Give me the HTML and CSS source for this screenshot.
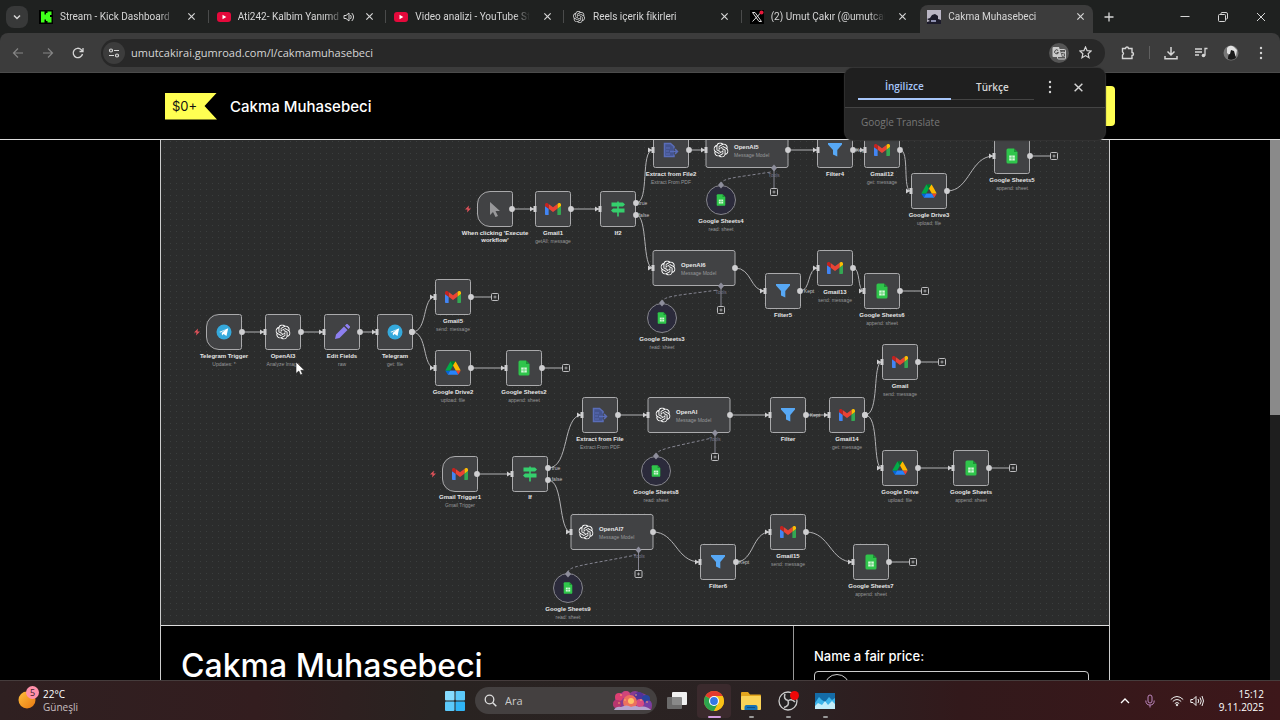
FILE: index.html
```html
<!DOCTYPE html>
<html lang="tr">
<head>
	<meta charset="utf-8">
	<meta name="viewport" content="width=device-width, initial-scale=1">
	<title>Cakma Muhasebeci</title>
	<link rel="stylesheet" href="styles.css">
</head>
<body>

	<!-- Shared icons -->
	<svg class="defs" width="0" height="0" aria-hidden="true">
		<symbol id="x" viewBox="0 0 10 10"><path d="M1.5 1.5l7 7M8.5 1.5l-7 7" fill="none" stroke="currentColor" stroke-width="1.3"/></symbol>
		<symbol id="dots" viewBox="0 0 4 14"><g fill="currentColor"><circle cx="2" cy="2" r="1.2"/><circle cx="2" cy="7" r="1.2"/><circle cx="2" cy="12" r="1.2"/></g></symbol>
		<symbol id="youtube" viewBox="0 0 14 14"><rect y="2" width="14" height="10" rx="3" fill="#e5093b"/><path d="M5.5 4.8v4.4L9.3 7z" fill="#fff"/></symbol>
		<symbol id="openai" viewBox="0 0 24 24"><path fill="currentColor" d="M22.2819 9.8211a5.9847 5.9847 0 0 0-.5157-4.9108 6.0462 6.0462 0 0 0-6.5098-2.9A6.0651 6.0651 0 0 0 4.9807 4.1818a5.9847 5.9847 0 0 0-3.9977 2.9 6.0462 6.0462 0 0 0 .7427 7.0966 5.98 5.98 0 0 0 .511 4.9107 6.051 6.051 0 0 0 6.5146 2.9001A5.9847 5.9847 0 0 0 13.2599 24a6.0557 6.0557 0 0 0 5.7718-4.2058 5.9894 5.9894 0 0 0 3.9977-2.9001 6.0557 6.0557 0 0 0-.7475-7.073zm-9.022 12.6081a4.4755 4.4755 0 0 1-2.8764-1.0408l.1419-.0804 4.7783-2.7582a.7948.7948 0 0 0 .3927-.6813v-6.7369l2.02 1.1686a.071.071 0 0 1 .038.052v5.5826a4.504 4.504 0 0 1-4.4945 4.4944zm-9.6607-4.1254a4.4708 4.4708 0 0 1-.5346-3.0137l.142.0852 4.783 2.7582a.7712.7712 0 0 0 .7806 0l5.8428-3.3685v2.3324a.0804.0804 0 0 1-.0332.0615L9.74 19.9502a4.4992 4.4992 0 0 1-6.1408-1.6464zM2.3408 7.8956a4.485 4.485 0 0 1 2.3655-1.9728V11.6a.7664.7664 0 0 0 .3879.6765l5.8144 3.3543-2.0201 1.1685a.0757.0757 0 0 1-.071 0l-4.8303-2.7865A4.504 4.504 0 0 1 2.3408 7.872zm16.5963 3.8558L13.1038 8.364 15.1192 7.2a.0757.0757 0 0 1 .071 0l4.8303 2.7913a4.4944 4.4944 0 0 1-.6765 8.1042v-5.6772a.79.79 0 0 0-.407-.667zm2.0107-3.0231l-.142-.0852-4.7735-2.7818a.7759.7759 0 0 0-.7854 0L9.409 9.2297V6.8974a.0662.0662 0 0 1 .0284-.0615l4.8303-2.7866a4.4992 4.4992 0 0 1 6.6802 4.66zM8.3065 12.863l-2.02-1.1638a.0804.0804 0 0 1-.038-.0567V6.0742a4.4992 4.4992 0 0 1 7.3757-3.4537l-.142.0805L8.704 5.459a.7948.7948 0 0 0-.3927.6813zm1.0976-2.3654l2.602-1.4998 2.6069 1.4998v2.9994l-2.5974 1.4997-2.6067-1.4997Z"/></symbol>
	</svg>

	<header class="browser">
		<div class="tabstrip">
			<button class="tab-search" aria-label="Search tabs"><svg width="10" height="10" viewBox="0 0 10 10"><path d="M2 3.5l3 3 3-3" fill="none" stroke="currentColor" stroke-width="1.5"/></svg></button>
			<div class="tabs">
				<div class="tab">
					<svg class="favicon" viewBox="0 0 14 14"><rect width="14" height="14" fill="#000"/><path d="M2 1.500h3.500v3h1.500v-1.500h1.500v-1.500h4v3.500h-1.500v2h1.500v5.500h-4v-1.500h-1.500v-1.500h-1.500v3h-3.500z" fill="#3fff1a"/></svg>
					<span class="tab-title">Stream - Kick Dashboard</span>
					<button class="tab-close" aria-label="Close"><svg><use href="#x"/></svg></button>
				</div>
				<div class="tab">
					<svg class="favicon"><use href="#youtube"/></svg>
					<span class="tab-title">Ati242- Kalbim Yanımd</span>
					<svg class="sound" viewBox="0 0 12 12" fill="none" stroke="currentColor"><path d="M1 4.500h2l3-2.500v8l-3-2.500h-2zM7.500 4q1.500 2 0 4M8.800 2q3.500 4 0 8"/></svg>
					<button class="tab-close" aria-label="Close"><svg><use href="#x"/></svg></button>
				</div>
				<div class="tab">
					<svg class="favicon"><use href="#youtube"/></svg>
					<span class="tab-title">Video analizi - YouTube Stu</span>
					<button class="tab-close" aria-label="Close"><svg><use href="#x"/></svg></button>
				</div>
				<div class="tab">
					<svg class="favicon"><use href="#openai" x="1" y="1" width="12" height="12"/></svg>
					<span class="tab-title">Reels içerik fikirleri</span>
					<button class="tab-close" aria-label="Close"><svg><use href="#x"/></svg></button>
				</div>
				<div class="tab">
					<svg class="favicon" viewBox="0 0 14 14"><rect width="14" height="14" fill="#000"/><path d="M2.500 2.500h2.500l6.500 9h-2.500zM11 2.500l-8.500 9" fill="none" stroke="#ddd"/><circle cx="11.500" cy="2.500" r="2" fill="#e5193b"/></svg>
					<span class="tab-title">(2) Umut Çakır (@umutcak</span>
					<button class="tab-close" aria-label="Close"><svg><use href="#x"/></svg></button>
				</div>
				<div class="tab tab-active">
					<svg class="favicon" viewBox="0 0 14 14"><rect width="14" height="14" fill="#b9b5c4"/><path d="M0 9l3-1 2-3 3-1 3 2 0 3 3 1v4h-14v-2l3-1z" fill="#1c1b2b"/><path d="M4 10h5v2h-5z" fill="#8d90b0"/></svg>
					<span class="tab-title">Cakma Muhasebeci</span>
					<button class="tab-close" aria-label="Close"><svg><use href="#x"/></svg></button>
				</div>
			</div>
			<button class="new-tab" aria-label="New tab"><svg width="10" height="10" viewBox="0 0 10 10"><path d="M5 .5v9M.5 5h9" stroke="currentColor" stroke-width="1.300"/></svg></button>
			<div class="window-controls">
				<button aria-label="Minimize"><svg width="10" height="10" viewBox="0 0 10 10"><path d="M.5 4.500h9" stroke="currentColor"/></svg></button>
				<button aria-label="Restore"><svg width="10" height="10" viewBox="0 0 10 10" fill="none" stroke="currentColor"><rect x=".5" y="2.500" width="7" height="7" rx="1"/><path d="M3 2v-.5q0-1 1-1h4q1.500 0 1.500 1.500v4q0 1-1 1h-.5"/></svg></button>
				<button aria-label="Close window"><svg width="10" height="10" viewBox="0 0 10 10"><path d="M1 1l8 8M9 1l-8 8" stroke="currentColor"/></svg></button>
			</div>
		</div>

		<div class="toolbar">
			<div class="nav-buttons">
				<button class="off" aria-label="Back"><svg width="12" height="12" viewBox="0 0 12 12"><path d="M11 6h-9.500M6 1.500l-4.500 4.500 4.500 4.500" fill="none" stroke="currentColor" stroke-width="1.200"/></svg></button>
				<button class="off" aria-label="Forward"><svg width="12" height="12" viewBox="0 0 12 12"><path d="M1 6h9.500M6 1.500l4.500 4.500-4.500 4.500" fill="none" stroke="currentColor" stroke-width="1.200"/></svg></button>
				<button aria-label="Reload"><svg width="12" height="12" viewBox="0 0 12 12"><path d="M10.500 7a4.700 4.700 0 1 1-1.300-4.400l1.500 1.600M11 1v3.500h-3.500" fill="none" stroke="currentColor" stroke-width="1.300"/></svg></button>
			</div>
			<div class="omnibox">
				<button class="site-info" aria-label="Site information"><svg width="12" height="12" viewBox="0 0 12 12" fill="none" stroke="currentColor" stroke-width="1.200"><circle cx="3" cy="3.500" r="1.500"/><path d="M6 3.500h5M1 8.500h5"/><circle cx="9" cy="8.500" r="1.500"/></svg></button>
				<input class="url" type="text" aria-label="Address" value="umutcakirai.gumroad.com/l/cakmamuhasebeci">
				<button class="translate" aria-label="Translate this page"><svg width="14" height="14" viewBox="0 0 14 14"><rect x="5.500" y="3.500" width="8" height="9.500" rx="1" fill="none" stroke="#ccc"/><path d="M1.500 1h5.500l3 10h-8.500q-1 0-1-1v-8q0-1 1-1z" fill="#ccc"/><path d="M6.200 4.600a2 2 0 1 0 .3 2h-1.800" fill="none" stroke="#444"/><path d="M9 6.500h4M11 5.500v1M12.500 6.500q-1 3-2.500 4M10 8l2.500 3" fill="none" stroke="#ccc" stroke-width=".8"/></svg></button>
				<button class="star" aria-label="Bookmark this tab"><svg width="13" height="13" viewBox="0 0 13 13"><path d="M6.500 1l1.600 3.700 4 .3-3 2.700.9 4-3.500-2.100-3.500 2.100.9-4-3-2.700 4-.3z" fill="none" stroke="currentColor" stroke-width="1.200"/></svg></button>
			</div>
			<div class="actions">
				<button aria-label="Extensions"><svg width="14" height="14" viewBox="0 0 14 14"><path d="M1.500 2.500h3a1.500 1.500 0 0 1 3 0h3.500v4a1.500 1.500 0 0 1 0 3v3h-9.500v-3.500q2-1.500 0-3z" fill="none" stroke="currentColor" stroke-width="1.400"/></svg></button>
				<span class="divider"></span>
				<button aria-label="Downloads"><svg width="14" height="14" viewBox="0 0 14 14"><path d="M7 1v7.500M3.500 5.500l3.500 3.500 3.500-3.500M1 10v2.800h12v-2.800" fill="none" stroke="currentColor" stroke-width="1.500"/></svg></button>
				<button aria-label="Media"><svg width="14" height="14" viewBox="0 0 14 14"><path d="M1 3h7M1 6h7M1 9h4M13.500 2.500h-2.500v7" fill="none" stroke="currentColor" stroke-width="1.300"/><circle cx="9.500" cy="9.500" r="1.800" fill="currentColor"/></svg></button>
				<button aria-label="Profile"><svg width="16" height="16" viewBox="0 0 16 16"><circle cx="8" cy="8" r="7.500" fill="#777"/><path d="M4 3q3-4 7-1l3 3-1 6-4 1-5-4z" fill="#e1e1e1"/><path d="M5 14q0-5 2-5l1-4 3 1 2 7q-4 3-8 1z" fill="#191919"/></svg></button>
				<button aria-label="Menu"><svg width="4" height="14"><use href="#dots"/></svg></button>
			</div>
		</div>

		<div class="translate-popup">
			<div class="languages">
				<button class="language selected">İngilizce</button>
				<button class="language">Türkçe</button>
				<button class="popup-icon" aria-label="Options"><svg width="4" height="14"><use href="#dots"/></svg></button>
				<button class="popup-icon" aria-label="Close"><svg width="11" height="11"><use href="#x"/></svg></button>
			</div>
			<div class="brand"><b>Google</b> Translate</div>
		</div>
	</header>

	<main class="page">
		<div class="buy-bar">
			<div class="buy-bar-inner">
				<span class="price-tag">$0+</span>
				<span class="product-name">Cakma Muhasebeci</span>
				<button class="buy" aria-label="I want this!"></button>
			</div>
		</div>

		<div class="scroller">
			<article class="product">
				<svg class="cover" viewBox="161 140 948 485" role="img" aria-label="Workflow">
					<defs>
						<pattern id="grid" width="6" height="6" patternUnits="userSpaceOnUse"><rect x="2" y="3" width="1" height="1" fill="#3b3e3e"/></pattern>
						<marker id="out" viewBox="-4 -4 8 8" markerWidth="8" markerHeight="8" markerUnits="userSpaceOnUse"><circle r="2.900" fill="#cfcfd1"/></marker>
						<marker id="in" viewBox="-6 -4 10 8" refX="0" markerWidth="10" markerHeight="8" markerUnits="userSpaceOnUse"><path d="M-5-2.500l4 2.500-4 2.500zM-1.500-3h3v6h-3z" fill="#cfcfd1"/></marker>
						<marker id="add" viewBox="-1 -5 10 10" refX="0" markerWidth="10" markerHeight="10" markerUnits="userSpaceOnUse"><use href="#plus" x="4"/></marker>
						<g id="plus"><rect x="-3.500" y="-3.500" width="7" height="7" rx="1" fill="#2b2c2c" stroke="#bdbdbf"/><path d="M-1.500 0h3M0-1.500v3" stroke="#bdbdbf" stroke-width=".8"/></g>
						<rect id="box" class="shape" x="-17.500" y="-17.500" width="35" height="35" rx="2"/>
						<path id="trigger" class="shape" d="M-5-17.500h20.500q2 0 2 2v31q0 2-2 2h-20.500a12.500 12.500 0 0 1-12.500-12.500v-10a12.500 12.500 0 0 1 12.500-12.500z"/>
						<rect id="wide" class="shape" x="0" y="-17.500" width="82" height="35" rx="2"/>
						<circle id="round" r="14.500" fill="#2b2a3b" stroke="#86868c"/>
						<path id="diamond" d="M0-3.500l3 3.500-3 3.500-3-3.500z" fill="#8e8e9c"/>
						<path id="bolt" d="M1-3.500l-4 4h2.500l-.5 3 4-4h-2.500z" fill="#e2525a"/>
						<g id="gmail" transform="translate(-8 -6) scale(.182) translate(-52 -42)">
							<path fill="#4285f4" d="M58 108h14V74L52 59v43c0 3.320 2.690 6 6 6"/>
							<path fill="#34a853" d="M120 108h14c3.320 0 6-2.690 6-6V59l-20 15"/>
							<path fill="#fbbc04" d="M120 48v26l20-15v-8c0-7.420-8.470-11.650-14.400-7.200"/>
							<path fill="#ea4335" d="M72 74V48l24 18 24-18v26L96 92"/>
							<path fill="#c5221f" d="M52 51v8l20 15V48l-5.600-4.200c-5.940-4.450-14.400-.22-14.400 7.200"/>
						</g>
						<g id="drive" transform="translate(-7.500 -6.700) scale(.172)">
							<path fill="#0066da" d="m6.600 66.850 3.850 6.650c.8 1.400 1.950 2.500 3.300 3.300l13.750-23.800h-27.500c0 1.550.4 3.100 1.200 4.500z"/>
							<path fill="#00ac47" d="m43.650 25-13.750-23.800c-1.350.8-2.500 1.900-3.300 3.300l-25.400 44a9.060 9.060 0 0 0 -1.200 4.500h27.500z"/>
							<path fill="#ea4335" d="m73.550 76.800c1.350-.8 2.500-1.900 3.300-3.300l1.600-2.750 7.650-13.250c.8-1.400 1.200-2.950 1.200-4.500h-27.502l5.852 11.500z"/>
							<path fill="#00832d" d="m43.650 25 13.750-23.800c-1.350-.8-2.900-1.200-4.500-1.200h-18.500c-1.600 0-3.150.45-4.500 1.200z"/>
							<path fill="#2684fc" d="m59.800 53h-32.300l-13.750 23.800c1.350.8 2.900 1.200 4.500 1.200h50.800c1.600 0 3.150-.45 4.500-1.200z"/>
							<path fill="#ffba00" d="m73.400 26.500-12.700-22c-.8-1.400-1.950-2.500-3.300-3.300l-13.750 23.800 16.150 28h27.450c0-1.550-.4-3.100-1.200-4.500z"/>
						</g>
						<g id="sheets"><path d="M-5.500-6q0-1.500 1.500-1.500h6l3.500 3.500v10q0 1.500-1.500 1.500h-8q-1.500 0-1.500-1.500z" fill="#2fc54b"/><path d="M2-7.500l3.500 3.500h-3.500z" fill="#1c8f35"/><path d="M-2.800-.5h5.600v5h-5.600z" fill="#d6f7da"/><path d="M0-.5v5M-2.800 2h5.600" stroke="#2fc54b" stroke-width=".6"/></g>
						<g id="telegram"><circle r="7.500" fill="#35a9dc"/><path d="M-4.800 0l9-3.700-1.700 7.600-3-2-1.500 1.500-.3-2.500 4-3.300-5 3z" fill="#fff"/></g>
						<g id="filter"><path d="M-7-7h14v1.500l-4.700 5.500v6.500l-4.300-2v-4.500l-5-5.500z" fill="#57a8f5"/></g>
						<g id="signpost" fill="#35cf6d"><path d="M-.8-7.500h1.600v15h-1.600z"/><path d="M-6.500-6.500h11.500l2 2-2 2h-11.500zM6.500-.5h-11.500l-2 2 2 2h11.500z"/></g>
						<g id="extract" fill="none" stroke="#5a6db8" stroke-width="1.500"><path d="M3-1.500v-2l-3.500-3h-6v13h9.500v-2" fill="#44548f"/><path d="M-1 1.500h7M4-1l2.500 2.500-2.500 2.500"/><path d="M-5-2h4M-5 1h3M-5 4h4" stroke-width="1"/></g>
						<path id="pencil" d="M-7 7l1-4.500 8-8 3.500 3.500-8 8zM3-6.500l1.500-1.500 1 0 2.500 2.500v1l-1.500 1.500z" fill="#8d7ff0"/>
						<use id="ai" href="#openai" x="-7.500" y="-7.500" width="15" height="15"/>
					</defs>

					<rect x="161" y="140" width="948" height="485" fill="#2b2c2c"/>
					<rect x="161" y="140" width="948" height="485" fill="url(#grid)"/>

					<g class="node" transform="translate(671 150)"><use href="#box"/><use href="#extract"/><text class="name" y="26">Extract from File2</text><text class="sub" y="34">Extract From PDF</text></g>
					<g class="node" transform="translate(706 150)"><use href="#wide"/><use href="#ai" x="15"/><text class="name start" x="28" y="-1">OpenAI5</text><text class="sub start" x="28" y="7">Message Model</text></g>
					<g class="node" transform="translate(835 150)"><use href="#box"/><use href="#filter"/><text class="name" y="26">Filter4</text></g>
					<g class="node" transform="translate(882 150)"><use href="#box"/><use href="#gmail"/><text class="name" y="26">Gmail12</text><text class="sub" y="34">get: message</text></g>
					<g class="node" transform="translate(929 191)"><use href="#box"/><use href="#drive"/><text class="name" y="26">Google Drive3</text><text class="sub" y="34">upload: file</text></g>
					<g class="node" transform="translate(1012 156)"><use href="#box"/><use href="#sheets"/><text class="name" y="26">Google Sheets5</text><text class="sub" y="34">append: sheet</text></g>

					<g class="node" transform="translate(495 209)"><use href="#bolt" x="-27"/><use href="#trigger"/><path d="M-5-7l10 9h-4.500l2.500 5-2.500 1-2.500-5-3 3z" fill="#98989a"/><text class="name" y="26">When clicking 'Execute</text><text class="name" y="33">workflow'</text></g>
					<g class="node" transform="translate(553 209)"><use href="#box"/><use href="#gmail"/><text class="name" y="26">Gmail1</text><text class="sub" y="34">getAll: message</text></g>
					<g class="node" transform="translate(618 209)"><use href="#box"/><use href="#signpost"/><text class="name" y="26">If2</text></g>
					<g class="node" transform="translate(721 200)"><use href="#round"/><use href="#sheets" transform="scale(.78)"/><text class="name" y="23">Google Sheets4</text><text class="sub" y="31">read: sheet</text></g>

					<g class="node" transform="translate(653 268)"><use href="#wide"/><use href="#ai" x="15"/><text class="name start" x="28" y="-1">OpenAI6</text><text class="sub start" x="28" y="7">Message Model</text></g>
					<g class="node" transform="translate(783 291)"><use href="#box"/><use href="#filter"/><text class="name" y="26">Filter5</text></g>
					<g class="node" transform="translate(835 268)"><use href="#box"/><use href="#gmail"/><text class="name" y="26">Gmail13</text><text class="sub" y="34">send: message</text></g>
					<g class="node" transform="translate(882 291)"><use href="#box"/><use href="#sheets"/><text class="name" y="26">Google Sheets6</text><text class="sub" y="34">append: sheet</text></g>
					<g class="node" transform="translate(662 318)"><use href="#round"/><use href="#sheets" transform="scale(.78)"/><text class="name" y="23">Google Sheets3</text><text class="sub" y="31">read: sheet</text></g>

					<g class="node" transform="translate(224 332)"><use href="#bolt" x="-27"/><use href="#trigger"/><use href="#telegram"/><text class="name" y="26">Telegram Trigger</text><text class="sub" y="34">Updates: *</text></g>
					<g class="node" transform="translate(283 332)"><use href="#box"/><use href="#ai"/><text class="name" y="26">OpenAI3</text><text class="sub" y="34">Analyze Image</text></g>
					<g class="node" transform="translate(342 332)"><use href="#box"/><use href="#pencil"/><text class="name" y="26">Edit Fields</text><text class="sub" y="34">raw</text></g>
					<g class="node" transform="translate(395 332)"><use href="#box"/><use href="#telegram"/><text class="name" y="26">Telegram</text><text class="sub" y="34">get: file</text></g>
					<g class="node" transform="translate(453 297)"><use href="#box"/><use href="#gmail"/><text class="name" y="26">Gmail5</text><text class="sub" y="34">send: message</text></g>
					<g class="node" transform="translate(453 368)"><use href="#box"/><use href="#drive"/><text class="name" y="26">Google Drive2</text><text class="sub" y="34">upload: file</text></g>
					<g class="node" transform="translate(524 368)"><use href="#box"/><use href="#sheets"/><text class="name" y="26">Google Sheets2</text><text class="sub" y="34">append: sheet</text></g>

					<g class="node" transform="translate(460 474)"><use href="#bolt" x="-27"/><use href="#trigger"/><use href="#gmail"/><text class="name" y="25">Gmail Trigger1</text><text class="sub" y="33">Gmail Trigger</text></g>
					<g class="node" transform="translate(530 474)"><use href="#box"/><use href="#signpost"/><text class="name" y="25">If</text></g>
					<g class="node" transform="translate(600 415)"><use href="#box"/><use href="#extract"/><text class="name" y="26">Extract from File</text><text class="sub" y="34">Extract From PDF</text></g>
					<g class="node" transform="translate(648 415)"><use href="#wide"/><use href="#ai" x="15"/><text class="name start" x="28" y="-1">OpenAI</text><text class="sub start" x="28" y="7">Message Model</text></g>
					<g class="node" transform="translate(788 415)"><use href="#box"/><use href="#filter"/><text class="name" y="26">Filter</text></g>
					<g class="node" transform="translate(847 415)"><use href="#box"/><use href="#gmail"/><text class="name" y="26">Gmail14</text><text class="sub" y="34">get: message</text></g>
					<g class="node" transform="translate(900 362)"><use href="#box"/><use href="#gmail"/><text class="name" y="26">Gmail</text><text class="sub" y="34">send: message</text></g>
					<g class="node" transform="translate(900 468)"><use href="#box"/><use href="#drive"/><text class="name" y="26">Google Drive</text><text class="sub" y="34">upload: file</text></g>
					<g class="node" transform="translate(971 468)"><use href="#box"/><use href="#sheets"/><text class="name" y="26">Google Sheets</text><text class="sub" y="34">append: sheet</text></g>
					<g class="node" transform="translate(656 471)"><use href="#round"/><use href="#sheets" transform="scale(.78)"/><text class="name" y="23">Google Sheets8</text><text class="sub" y="31">read: sheet</text></g>

					<g class="node" transform="translate(571 532)"><use href="#wide"/><use href="#ai" x="15"/><text class="name start" x="28" y="-1">OpenAI7</text><text class="sub start" x="28" y="7">Message Model</text></g>
					<g class="node" transform="translate(718 562)"><use href="#box"/><use href="#filter"/><text class="name" y="26">Filter6</text></g>
					<g class="node" transform="translate(788 532)"><use href="#box"/><use href="#gmail"/><text class="name" y="26">Gmail15</text><text class="sub" y="34">send: message</text></g>
					<g class="node" transform="translate(871 562)"><use href="#box"/><use href="#sheets"/><text class="name" y="26">Google Sheets7</text><text class="sub" y="34">append: sheet</text></g>
					<g class="node" transform="translate(568 588)"><use href="#round"/><use href="#sheets" transform="scale(.78)"/><text class="name" y="23">Google Sheets9</text><text class="sub" y="31">read: sheet</text></g>

					<g class="edges">
						<path d="M689 150H706"/><path d="M788 150H818"/><path d="M853 150H865"/>
						<path d="M900 150C910 150 902 191 911 191"/>
						<path d="M947 191C970 191 970 156 994 156"/>
						<path d="M512 209H535"/><path d="M571 209H600"/>
						<path d="M636 203C650 203 640 150 653 150"/>
						<path d="M636 215C648 215 642 268 653 268"/>
						<path d="M735 268C752 268 750 291 765 291"/>
						<path d="M800 291C811 291 807 268 818 268"/>
						<path d="M853 268C861 268 857 291 864 291"/>
						<path d="M242 332H265"/><path d="M301 332H324"/><path d="M360 332H377"/>
						<path d="M412 332C428 332 422 297 435 297"/>
						<path d="M412 332C428 332 422 368 435 368"/>
						<path d="M471 368H506"/>
						<path d="M477 474H512"/>
						<path d="M548 468C570 468 562 415 582 415"/>
						<path d="M548 480C564 480 558 532 571 532"/>
						<path d="M618 415H648"/><path d="M730 415H770"/><path d="M806 415H829"/>
						<path d="M865 415C880 415 872 362 882 362"/>
						<path d="M865 415C880 415 872 468 882 468"/>
						<path d="M918 468H953"/>
						<path d="M653 532C676 532 676 562 700 562"/>
						<path d="M736 562C754 562 752 532 770 532"/>
						<path d="M806 532C830 532 830 562 853 562"/>
					</g>
					<g class="edges open">
						<path d="M1030 156H1050"/><path d="M900 291H921"/><path d="M471 297H491"/><path d="M542 368H562"/>
						<path d="M918 362H938"/><path d="M989 468H1009"/><path d="M889 562H909"/>
					</g>

					<!-- Tool inputs below the model nodes -->
					<g class="tools">
						<path class="dashed" d="M721 185C721 178 733 178 771 172M662 303C662 296 674 296 718 290M656 456C656 449 668 448 712 438M568 573C568 566 580 566 636 555"/>
						<path d="M774 168v20M721 286v20M715 433v20M638.500 550v20"/>
					</g>
					<use href="#diamond" x="774" y="168"/><use href="#diamond" x="721" y="286"/><use href="#diamond" x="715" y="433"/><use href="#diamond" x="638.500" y="550"/>
					<use href="#diamond" x="721" y="185"/><use href="#diamond" x="662" y="303"/><use href="#diamond" x="656" y="456"/><use href="#diamond" x="568" y="574"/>
					<use href="#plus" x="774" y="192"/><use href="#plus" x="721" y="310"/><use href="#plus" x="715" y="457"/><use href="#plus" x="638.500" y="574"/>
					<g class="tool-label"><text x="774" y="177">Tools</text><text x="721" y="294">Tools</text><text x="715" y="441">Tools</text><text x="639" y="558">Tools</text></g>
					<g class="edge-label">
						<text x="643" y="205">true</text><text x="644" y="217">false</text><text x="556" y="470">true</text><text x="557" y="481">false</text>
						<text x="861" y="152">Kept</text><text x="809" y="293">Kept</text><text x="815" y="417">Kept</text><text x="744" y="564">Kept</text>
					</g>
					<path d="M296 362v11.500l2.800-2.500 1.700 4 2-.9-1.700-3.800h3.700z" fill="#fff" stroke="#222" stroke-width=".6"/>
				</svg>

				<div class="details">
					<section class="summary">
						<h1>Cakma Muhasebeci</h1>
					</section>
					<section class="purchase">
						<label for="price">Name a fair price:</label>
						<div class="price-field">
							<span class="currency"></span>
							<input id="price" type="text">
						</div>
					</section>
				</div>
			</article>
			<div class="scrollbar"><div class="thumb"></div></div>
		</div>
	</main>

	<footer class="taskbar">
		<button class="weather">
			<svg class="sun" width="22" height="24" viewBox="0 4 22 24"><defs><linearGradient id="sun" x2="1" y2="1"><stop stop-color="#ffbe3c"/><stop offset="1" stop-color="#e87811"/></linearGradient></defs><circle cx="9" cy="15" r="8.500" fill="url(#sun)"/><circle cx="14.500" cy="7.500" r="6.500" fill="#ff90a9"/><text x="14.500" y="11" class="badge">5</text></svg>
			<span><strong>22°C</strong><br>Güneşli</span>
		</button>

		<div class="apps">
			<button class="app" aria-label="Start"><svg width="20" height="20" viewBox="0 0 20 20"><g fill="#5cc9fa"><rect width="9.500" height="9.500" rx="1" fill="#86dcff"/><rect x="10.500" width="9.500" height="9.500" rx="1"/><rect y="10.500" width="9.500" height="9.500" rx="1"/><rect x="10.500" y="10.500" width="9.500" height="9.500" rx="1" fill="#30b4f5"/></g></svg></button>
			<label class="search">
				<svg width="13" height="13" viewBox="0 0 13 13"><circle cx="5.500" cy="5.500" r="4.300" fill="none" stroke="#ddd" stroke-width="1.300"/><path d="M8.800 8.800l3.500 3.500" stroke="#ddd" stroke-width="1.500"/></svg>
				<input type="text" placeholder="Ara" aria-label="Ara">
				<svg width="42" height="22" viewBox="0 0 42 22">
					<path d="M3 18q-4-4 0-8 0-6 6-7 5-4 9 0 5-4 10 0 7 0 8 6 6 4 3 11z" fill="#873b91"/>
					<circle cx="7" cy="7" r="4" fill="#dc3f72"/><circle cx="5" cy="14" r="4" fill="#b8366e"/><circle cx="14" cy="5" r="4" fill="#d04579"/><circle cx="27" cy="7" r="5" fill="#50339a"/><circle cx="34" cy="9" r="4" fill="#28449f"/><circle cx="28" cy="13" r="4" fill="#d64b83"/><circle cx="36" cy="14" r="3.500" fill="#743fa5"/><circle cx="18" cy="12" r="7" fill="#ec705e"/><circle cx="19" cy="11" r="3" fill="#ffc165"/>
					<g fill="#ffb36b"><circle cx="9" cy="5" r=".8"/><circle cx="13" cy="10" r=".8"/><circle cx="24" cy="5" r=".8"/><circle cx="29" cy="10" r=".8"/><circle cx="35" cy="12" r=".8"/><circle cx="7" cy="13" r=".8"/></g>
					<path d="M2 20q2-4 7-3 6-3 10 0 5-2 8 0 7-2 12 3z" fill="#b7a5cf"/>
				</svg>
			</label>
			<button class="app" aria-label="Task view"><svg width="20" height="20" viewBox="0 0 20 20"><rect x="5" y="1" width="15" height="13" rx="1" fill="#f0f0f0"/><rect y="6" width="15" height="12" rx="1" fill="#777" fill-opacity=".85"/></svg></button>
			<button class="app active" aria-label="Chrome"><svg width="20" height="20" viewBox="0 0 20 20"><circle cx="10" cy="10" r="10" fill="#fbc116"/><path d="M10 10L1.340 5a10 10 0 0 1 17.320 0z" fill="#e33b2e"/><path d="M10 10L1.340 5a10 10 0 0 0 8.660 15l4-7.500z" fill="#2da44e"/><path d="M10 5h8.660a10 10 0 0 1-8.660 15l4.300-7.500z" fill="#fbc116"/><circle cx="10" cy="10" r="5" fill="#fff"/><circle cx="10" cy="10" r="3.900" fill="#3478e5"/></svg></button>
			<button class="app running" aria-label="Explorer"><svg width="20" height="20" viewBox="0 0 20 20"><path d="M0 2q0-1 1-1h6l2 2.500h10q1 0 1 1v13.500h-20z" fill="#e2a51e"/><rect y="5" width="20" height="14" rx="1" fill="#fad358"/><path d="M3.500 19v-3q0-2 2-2h9q2 0 2 2v3z" fill="#1672b5"/><path d="M6 16.500h8" stroke="#0d4f86"/></svg></button>
			<button class="app running" aria-label="OBS"><svg width="22" height="20" viewBox="-1 0 22 20"><circle cx="10" cy="10" r="9" fill="#242122" stroke="#ccc" stroke-width="1.300"/><g fill="none" stroke="#c4c4c4" stroke-width="1.600"><path d="M7 3q-2 5 3 6.500"/><path d="M17 11q-4-4-7-1"/><path d="M6 16.500q6-2 4-6.500"/></g><circle cx="16.500" cy="4.500" r="4.500" fill="#ee0808"/></svg></button>
			<button class="app running" aria-label="Monitor"><svg width="20" height="20" viewBox="0 0 20 20"><rect y="2" width="20" height="16" fill="#146ca8"/><path d="M0 12l4-6 3 3 3 2 4-5 3 3 3-2v11h-20z" fill="#3cb4ea"/><path d="M0 15l3-3 4 2 3-4 3 4 4-4 3 3v5h-20z" fill="#c4eefb"/></svg></button>
		</div>

		<div class="tray">
			<button aria-label="Hidden icons"><svg width="10" height="10" viewBox="0 0 10 10"><path d="M1 7l4-4 4 4" fill="none" stroke="#fff" stroke-width="1.300"/></svg></button>
			<button aria-label="Microphone"><svg width="10" height="14" viewBox="0 0 10 14" fill="none" stroke="#bd86be"><rect x="3" y="1" width="4" height="8" rx="2"/><path d="M.8 6.500q0 4.500 4.200 4.500t4.200-4.500M5 11v2.500"/></svg></button>
			<button class="network" aria-label="Network and volume"><svg width="14" height="12" viewBox="0 0 14 12" fill="none" stroke="#eee"><path d="M.8 4.500q6.200-6 12.400 0M2.800 6.500q4.200-4 8.400 0M4.800 8.500q2.200-2 4.400 0"/><circle cx="7" cy="10" r=".8" fill="#eee"/></svg><svg width="14" height="12" viewBox="0 0 14 12" fill="none" stroke="#eee"><path d="M.8 4.500h2.200l3-3v9l-3-3h-2.200zM8 4q1.500 2 0 4M10 2.500q2.500 3.500 0 7M12 1q3 5 0 10"/></svg></button>
			<time>15:12<br>9.11.2025</time>
		</div>
	</footer>

</body>
</html>
```

FILE: styles.css
```css
* {
	box-sizing: border-box;
}

body {
	margin: 0;
	height: 100vh;
	display: flex;
	flex-direction: column;
	overflow: hidden;
	background: #000;
	color: #fff;
	font-family: 'Open Sans', 'Noto Sans', sans-serif;
	font-size: 10px;
}

button, input {
	margin: 0;
	border: 0;
	padding: 0;
	background: none;
	color: inherit;
	font: inherit;
}

button {
	display: flex;
	align-items: center;
	justify-content: center;
}

svg {
	display: block;
	flex-shrink: 0;
}

.defs {
	position: absolute;
}

/* Browser window */

.browser {
	position: relative;
	z-index: 1;
	background: #1f2120;
	color: #d6d6d6;
}

.tabstrip {
	display: flex;
	height: 33px;
	padding-left: 6px;
}

.tab-search {
	width: 22px;
	height: 22px;
	margin: 6px 4px 0 0;
	border-radius: 8px;
	background: #383939;
}

.tabs {
	flex: 0 1 1066px;
	display: flex;
	min-width: 0;
}

.tab {
	position: relative;
	flex: 1 1 0;
	min-width: 0;
	display: flex;
	align-items: center;
	padding: 0 13px 0 7px;
}

.tab:not(.tab-active)::after {
	content: '';
	position: absolute;
	right: 1px;
	top: 10px;
	width: 1px;
	height: 13px;
	background: #4a4b4b;
}

.tab:nth-last-child(2)::after {
	display: none;
}

.tab-active::before {
	content: '';
	position: absolute;
	z-index: -1;
	left: 0;
	right: 5px;
	top: 5px;
	bottom: 0;
	border-radius: 8px 8px 0 0;
	background: #3c3c3c;
}

.favicon {
	width: 14px;
	height: 14px;
	margin-right: 7px;
}

.tab-title {
	flex: 1;
	overflow: hidden;
	font-family: Roboto, 'Open Sans', sans-serif;
	white-space: nowrap;
	mask-image: linear-gradient(to right, #000 calc(100% - 16px), transparent);
}

.sound {
	width: 12px;
	height: 12px;
}

.tab-close {
	width: 10px;
	height: 10px;
	margin-left: 12px;
}

.sound + .tab-close {
	margin-left: 9px;
}

.tab-close svg {
	width: 9px;
	height: 9px;
}

.new-tab {
	width: 22px;
}

.window-controls {
	display: flex;
	margin-left: auto;
}

.window-controls button {
	width: 38px;
}

.toolbar {
	display: flex;
	align-items: center;
	height: 40px;
	padding: 0 8px 0 7px;
	border-bottom: 1px solid #4b4b4b;
	border-radius: 8px 8px 0 0;
	background: #3c3c3c;
}

.nav-buttons {
	display: flex;
	gap: 8px;
	margin-right: 12px;
}

.nav-buttons button {
	width: 22px;
	height: 22px;
}

.off {
	color: #858585;
}

.omnibox {
	flex: 1;
	display: flex;
	align-items: center;
	height: 28px;
	padding: 0 13px 0 2px;
	border-radius: 14px;
	background: #282828;
}

.site-info {
	width: 22px;
	height: 22px;
	border-radius: 50%;
	background: #3c3c3c;
}

.url {
	flex: 1;
	margin-left: 6px;
	font-size: 11px;
	outline: none;
}

.translate {
	width: 20px;
	height: 20px;
	margin-right: 10px;
	border-radius: 50%;
	background: #555;
}

.actions {
	display: flex;
	align-items: center;
	gap: 8px;
	margin-left: 12px;
}

.actions button {
	width: 22px;
	height: 22px;
}

.divider {
	width: 1px;
	height: 13px;
	margin: 0 2px;
	background: #606060;
}

.translate-popup {
	position: absolute;
	top: 68px;
	right: 175px;
	width: 260px;
	border-radius: 8px;
	background: #282828;
	box-shadow: 0 0 1px 1px #333;
	overflow: hidden;
}

.languages {
	display: flex;
	height: 40px;
	padding: 0 13px;
	border-bottom: 1px solid #444;
	background: #1f1f1f;
}

.language {
	width: 84px;
	height: 32px;
	padding-top: 6px;
	border-bottom: 1px solid #444;
	font-weight: 600;
}

.selected {
	width: 93px;
	border-bottom: 2px solid #a8c7fa;
	color: #a8c7fa;
}

.popup-icon {
	width: 28px;
	height: 38px;
}

.language + .popup-icon {
	margin-left: 2px;
}

.brand {
	padding: 0 16px 3px;
	color: #777;
	line-height: 29px;
}

.brand b {
	font-weight: 500;
}

/* Product page */

.page {
	flex: 1;
	min-height: 0;
	display: flex;
	flex-direction: column;
	font-family: Inter, 'Liberation Sans', sans-serif;
}

.buy-bar {
	padding: 13px 20px;
	border-bottom: 1px solid #ddd;
}

.buy-bar-inner {
	display: flex;
	align-items: center;
	max-width: 950px;
	height: 40px;
	margin: 0 auto;
}

.price-tag {
	width: 52px;
	padding-left: 7px;
	background: #ffff52;
	clip-path: polygon(0 0, 100% 0, 76% 50%, 100% 100%, 0 100%);
	color: #111;
	font-size: 13px;
	line-height: 27px;
}

.product-name {
	margin-left: 13px;
	font-size: 15px;
	font-weight: 500;
}

.buy {
	width: 140px;
	height: 40px;
	margin-left: auto;
	border-radius: 4px;
	background: #ffff52;
}

.scroller {
	flex: 1;
	min-height: 0;
	display: flex;
	overflow: hidden;
}

.product {
	flex: 0 1 950px;
	align-self: flex-start;
	margin: 0 auto;
	border: 1px solid #ccc;
	border-top: 0;
}

.cover {
	width: 100%;
	color: #fff;
}

.shape {
	fill: #414244;
	stroke: #aaaaac;
}

.name, .sub, .tool-label, .edge-label {
	font-family: 'Liberation Sans', Arial, sans-serif;
	text-anchor: middle;
}

.name {
	font-size: 6px;
	font-weight: bold;
	fill: #e6e6e6;
}

.sub {
	font-size: 5px;
	fill: #98999b;
}

.start {
	text-anchor: start;
}

.edges path {
	fill: none;
	stroke: #b2b2b4;
	marker-start: url(#out);
	marker-end: url(#in);
}

.open path {
	marker-end: url(#add);
}

.tools path {
	fill: none;
	stroke: #858591;
}

.tools .dashed {
	stroke-dasharray: 3 2;
}

.tool-label, .edge-label {
	font-size: 5px;
	fill: #77778a;
}

.edge-label {
	fill: #c4c4c6;
}

.details {
	display: grid;
	grid-template-columns: 2fr 1fr;
	border-top: 1px solid #ddd;
}

.summary, .purchase {
	padding: 20px;
}

.purchase {
	border-left: 1px solid #999;
}

h1 {
	margin: 0;
	font-size: 32px;
	font-weight: 500;
	line-height: 40px;
}

label {
	display: block;
	font-size: 13px;
	font-weight: 500;
	line-height: 20px;
}

.price-field {
	display: flex;
	align-items: center;
	height: 32px;
	margin-top: 5px;
	padding: 0 9px;
	border: 1px solid #ccc;
	border-radius: 4px;
}

.currency {
	width: 26px;
	height: 26px;
	border: 1px solid #ccc;
	border-radius: 50%;
}

.price-field input {
	flex: 1;
	min-width: 0;
}

.scrollbar {
	width: 10px;
	background: #1e1e1e;
}

.thumb {
	height: 51%;
	background: #8a8a8a;
}

/* Taskbar */

.taskbar {
	display: grid;
	grid-template-columns: 1fr auto 1fr;
	align-items: center;
	height: 40px;
	border-top: 1px solid #453c3c;
	background: linear-gradient(to right, #2f2021, #331d1f 20%, #292321 34%, #2b2223 62%, #32191b 75%, #3d171a);
	line-height: 13px;
}

.weather {
	justify-self: start;
	gap: 3px;
	padding-left: 18px;
	color: #c9bfc0;
	text-align: left;
}

.weather strong {
	color: #fff;
	font-weight: 400;
}

.sun {
	overflow: visible;
}

.badge {
	fill: #40222a;
	font-size: 9px;
	text-anchor: middle;
}

.apps {
	display: flex;
	align-items: center;
	gap: 3px;
}

.app {
	position: relative;
	width: 34px;
	height: 34px;
	border-radius: 4px;
}

.active {
	background: #3b2a2d;
}

.active::after, .running::after {
	content: '';
	position: absolute;
	bottom: 0;
	width: 5px;
	height: 2px;
	border-radius: 1px;
	background: #999;
}

.active::after {
	width: 13px;
	background: #d39be0;
}

.search {
	display: flex;
	align-items: center;
	width: 182px;
	height: 27px;
	padding: 0 3px 0 9px;
	border-radius: 14px;
	background: #444040;
	font-weight: 400;
}

.search input {
	flex: 1;
	min-width: 0;
	margin-left: 8px;
	font-size: 11px;
}

.search input::placeholder {
	color: #c9c9c9;
}

.tray {
	justify-self: end;
	display: flex;
	align-items: center;
	gap: 15px;
	padding-right: 16px;
	text-align: right;
}

.network {
	gap: 6px;
}
```
